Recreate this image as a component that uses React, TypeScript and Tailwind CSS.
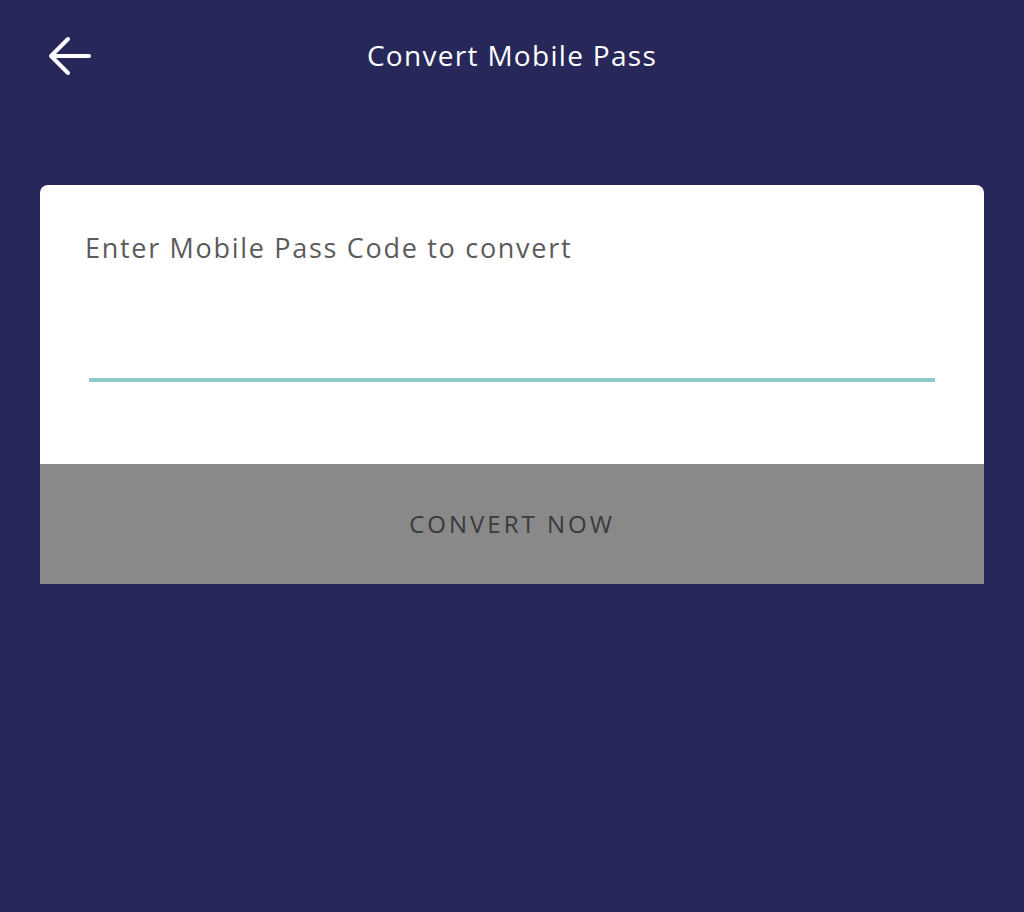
export default function App() {
  return (
    <main className="min-h-[912px] w-full bg-[#28275a] font-['Open_Sans',sans-serif]">
      {/* Header */}
      <header className="relative flex h-[110px] items-center justify-center">
        <button className="absolute left-[48px] top-[35px] text-white" aria-label="Back">
          <svg width="44" height="42" viewBox="0 0 44 42" fill="none" stroke="currentColor" strokeWidth="4" strokeLinecap="round" strokeLinejoin="round">
            <path d="M41 21H5" />
            <path d="M20 4L3 21l17 17" />
          </svg>
        </button>
        <h1 className="text-[28px] tracking-[1.3px] text-white">Convert Mobile Pass</h1>
      </header>

      {/* Card */}
      <div className="mx-[40px] mt-[75px] overflow-hidden rounded-t-[8px] bg-white">
        <div className="px-[45px] pt-[45px] pb-[82px]">
          <p className="text-[27px] leading-[36px] tracking-[1.7px] text-[#5b5b5b]">Enter Mobile Pass Code to convert</p>
          <div className="mt-[112px] ml-[4px] mr-[4px] h-[4px] bg-[#8ecac8]" />
        </div>
        <button className="flex h-[120px] w-full items-center justify-center bg-[#898989] text-[24px] tracking-[3px] text-[#3a3a3a]">
          CONVERT NOW
        </button>
      </div>
    </main>
  );
}
